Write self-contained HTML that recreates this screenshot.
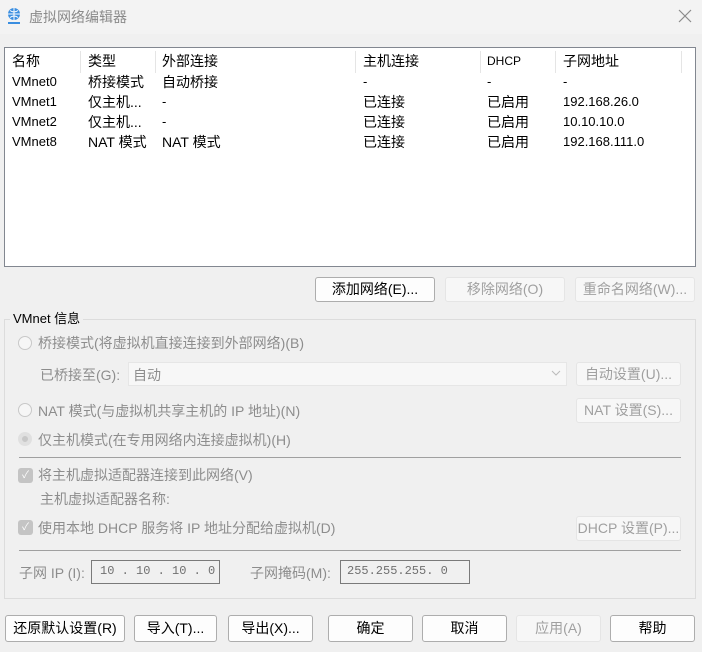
<!DOCTYPE html>
<html><head><meta charset="utf-8"><style>
*{box-sizing:border-box;margin:0;padding:0}
body{width:702px;height:652px;background:#f0f0f0;font-family:"Liberation Sans","Noto Sans CJK SC",sans-serif;font-size:13px;color:#000;position:relative;overflow:hidden}
.a{position:absolute;white-space:nowrap}
.title{left:0;top:0;width:702px;height:34px;background:#f3f3f3}
.tbl{left:4px;top:47px;width:692px;height:220px;background:#fff;border:1px solid #828790}
.hd{top:3px;height:20px;line-height:20px;font-size:14px}
.sep{top:3px;width:1px;height:22px;background:#e5e5e5}
.row{font-size:13px;height:20px;line-height:20px}
.btn{background:#fdfdfd;border:1px solid #d0d0d0;border-radius:3px;text-align:center;line-height:22px;font-size:14px}
.dis{color:#a0a0a0;background:#f7f7f7;border-color:#e5e5e5}
.g{color:#8d8d8d;font-size:14px}
.radio{width:14px;height:14px;border:1px solid #c8c8c8;border-radius:50%;background:#f6f6f6}
.chk{width:15px;height:15px;border-radius:3px;background:#c4c4c4;color:#fff;font-size:10px;text-align:center;line-height:15px}
.box{background:#f0f0f0;border:1px solid #7a7a7a;font-family:"Liberation Mono",monospace;color:#707070;font-size:12px;line-height:21px;padding-left:8px;overflow:hidden}
</style></head><body>
<div class="a title"></div>
<svg class="a" style="left:6px;top:7px" width="16" height="18" viewBox="0 0 16 18"><circle cx="8" cy="7" r="6" fill="#3a8ee0"/><path d="M2 7h12M8 1v12M4 3.5q4 3 8 0M4 10.5q4-3 8 0" stroke="#fff" stroke-width="1" fill="none"/><rect x="2" y="15" width="12" height="2" fill="#3a8ee0"/></svg>
<div class="a" style="left:29px;top:7px;font-size:14px;color:#8a8a8a">虚拟网络编辑器</div>
<svg class="a" style="left:678px;top:9px" width="14" height="14" viewBox="0 0 14 14"><path d="M1 1L13 13M13 1L1 13" stroke="#8a8a8a" stroke-width="1.2"/></svg>

<div class="a tbl">
<div class="a hd" style="left:7px">名称</div><div class="a sep" style="left:75px"></div>
<div class="a hd" style="left:83px">类型</div><div class="a sep" style="left:150px"></div>
<div class="a hd" style="left:157px">外部连接</div><div class="a sep" style="left:350px"></div>
<div class="a hd" style="left:358px">主机连接</div><div class="a sep" style="left:475px"></div>
<div class="a hd" style="left:482px;font-size:12px">DHCP</div><div class="a sep" style="left:550px"></div>
<div class="a hd" style="left:558px">子网地址</div><div class="a sep" style="left:676px"></div>
<div class="a row" style="left:7px;top:24px">VMnet0</div><div class="a row" style="left:83px;top:24px;font-size:14px">桥接模式</div><div class="a row" style="left:157px;top:24px;font-size:14px">自动桥接</div><div class="a row" style="left:358px;top:24px">-</div><div class="a row" style="left:482px;top:24px">-</div><div class="a row" style="left:558px;top:24px">-</div>
<div class="a row" style="left:7px;top:44px">VMnet1</div><div class="a row" style="left:83px;top:44px;font-size:14px">仅主机...</div><div class="a row" style="left:157px;top:44px">-</div><div class="a row" style="left:358px;top:44px;font-size:14px">已连接</div><div class="a row" style="left:482px;top:44px;font-size:14px">已启用</div><div class="a row" style="left:558px;top:44px">192.168.26.0</div>
<div class="a row" style="left:7px;top:64px">VMnet2</div><div class="a row" style="left:83px;top:64px;font-size:14px">仅主机...</div><div class="a row" style="left:157px;top:64px">-</div><div class="a row" style="left:358px;top:64px;font-size:14px">已连接</div><div class="a row" style="left:482px;top:64px;font-size:14px">已启用</div><div class="a row" style="left:558px;top:64px">10.10.10.0</div>
<div class="a row" style="left:7px;top:84px">VMnet8</div><div class="a row" style="left:83px;top:84px;font-size:14px">NAT 模式</div><div class="a row" style="left:157px;top:84px;font-size:14px">NAT 模式</div><div class="a row" style="left:358px;top:84px;font-size:14px">已连接</div><div class="a row" style="left:482px;top:84px;font-size:14px">已启用</div><div class="a row" style="left:558px;top:84px">192.168.111.0</div>
</div>

<div class="a btn" style="left:315px;top:277px;width:120px;height:25px;border-color:#adadad">添加网络(E)...</div>
<div class="a btn dis" style="left:445px;top:277px;width:120px;height:25px">移除网络(O)</div>
<div class="a btn dis" style="left:575px;top:277px;width:120px;height:25px">重命名网络(W)...</div>

<div class="a" style="left:4px;top:319px;width:692px;height:280px;border:1px solid #dcdcdc"></div>
<div class="a" style="left:10px;top:310px;background:#f0f0f0;padding:0 3px;font-size:13px;line-height:18px">VMnet 信息</div>

<div class="a radio" style="left:18px;top:336px"></div>
<div class="a g" style="left:38px;top:333px">桥接模式(将虚拟机直接连接到外部网络)(B)</div>
<div class="a g" style="left:40px;top:365px">已桥接至(G):</div>
<div class="a" style="left:128px;top:362px;width:439px;height:24px;background:#f7f7f7;border:1px solid #e6e6e6"></div>
<div class="a g" style="left:133px;top:365px">自动</div>
<svg class="a" style="left:551px;top:370px" width="10" height="6" viewBox="0 0 10 6"><path d="M1 1L5 5L9 1" stroke="#bbb" fill="none"/></svg>
<div class="a btn dis" style="left:576px;top:362px;width:105px;height:24px">自动设置(U)...</div>

<div class="a radio" style="left:18px;top:403px"></div>
<div class="a g" style="left:38px;top:401px">NAT 模式(与虚拟机共享主机的 IP 地址)(N)</div>
<div class="a btn dis" style="left:576px;top:398px;width:105px;height:25px">NAT 设置(S)...</div>

<div class="a radio" style="left:18px;top:432px;background:#c8c8c8;border:4px solid #e0e0e0"></div>
<div class="a g" style="left:38px;top:430px">仅主机模式(在专用网络内连接虚拟机)(H)</div>
<div class="a" style="left:19px;top:457px;width:662px;height:1px;background:#a0a0a0"></div>

<div class="a chk" style="left:18px;top:468px">✓</div>
<div class="a g" style="left:38px;top:465px">将主机虚拟适配器连接到此网络(V)</div>
<div class="a g" style="left:40px;top:489px">主机虚拟适配器名称:</div>
<div class="a chk" style="left:18px;top:520px">✓</div>
<div class="a g" style="left:38px;top:518px">使用本地 DHCP 服务将 IP 地址分配给虚拟机(D)</div>
<div class="a btn dis" style="left:576px;top:516px;width:105px;height:25px">DHCP 设置(P)...</div>
<div class="a" style="left:19px;top:550px;width:662px;height:1px;background:#a0a0a0"></div>

<div class="a g" style="left:19px;top:563px">子网 IP (I):</div>
<div class="a box" style="left:91px;top:560px;width:129px;height:24px">10 . 10 . 10 . 0</div>
<div class="a g" style="left:250px;top:563px">子网掩码(M):</div>
<div class="a box" style="left:340px;top:560px;width:130px;height:24px;padding-left:6px">255.255.255. 0</div>

<div class="a btn" style="left:5px;top:615px;width:120px;height:27px;line-height:25px;border-color:#adadad">还原默认设置(R)</div>
<div class="a btn" style="left:134px;top:615px;width:83px;height:27px;line-height:25px;border-color:#adadad">导入(T)...</div>
<div class="a btn" style="left:228px;top:615px;width:85px;height:27px;line-height:25px;border-color:#adadad">导出(X)...</div>
<div class="a btn" style="left:328px;top:615px;width:85px;height:27px;line-height:25px;border-color:#adadad">确定</div>
<div class="a btn" style="left:422px;top:615px;width:85px;height:27px;line-height:25px;border-color:#adadad">取消</div>
<div class="a btn dis" style="left:516px;top:615px;width:85px;height:27px;line-height:25px">应用(A)</div>
<div class="a btn" style="left:610px;top:615px;width:85px;height:27px;line-height:25px;border-color:#adadad">帮助</div>
</body></html>
